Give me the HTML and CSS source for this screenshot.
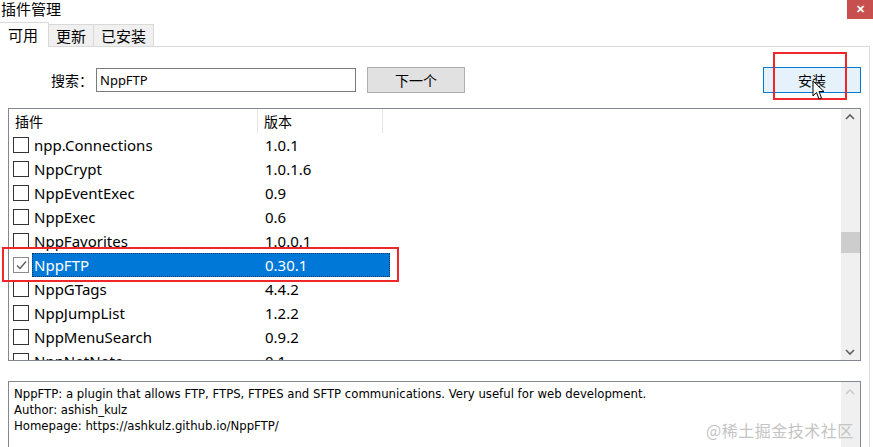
FILE: index.html
```html
<!DOCTYPE html>
<html>
  <head>
    <title>插件管理</title>
    <link rel="stylesheet" href="styles.css">
  </head>
  <body>
    <div class="titlebar">
      <span class="title">插件管理</span>
      <span class="close-btn">✕</span>
    </div>

    <div class="tabs">
      <div class="tab active">可用</div>
      <div class="tab">更新</div>
      <div class="tab">已安装</div>
    </div>

    <div class="panel">
      <div class="search-row">
        <label class="search-label">搜索：</label>
        <input type="text" class="search-input" value="NppFTP" />
        <button class="btn next-btn">下一个</button>
        <button class="btn install-btn">安装</button>
      </div>

      <div class="list-box">
        <div class="list-body">
          <div class="list-header">
            <div class="col-name">插件</div>
            <div class="col-version">版本</div>
          </div>
          <div class="row"><span class="check"></span><span class="cells"><span class="name">npp.Connections</span><span class="version">1.0.1</span></span></div>
          <div class="row"><span class="check"></span><span class="cells"><span class="name">NppCrypt</span><span class="version">1.0.1.6</span></span></div>
          <div class="row"><span class="check"></span><span class="cells"><span class="name">NppEventExec</span><span class="version">0.9</span></span></div>
          <div class="row"><span class="check"></span><span class="cells"><span class="name">NppExec</span><span class="version">0.6</span></span></div>
          <div class="row"><span class="check"></span><span class="cells"><span class="name">NppFavorites</span><span class="version">1.0.0.1</span></span></div>
          <div class="row selected">
            <span class="check checked">
              <svg width="13" height="13" viewBox="0 0 13 13"><path d="M2 6.5 L5 9.5 L11 2.5" fill="none" stroke="#5a5a5a" stroke-width="1.3"/></svg>
            </span>
            <span class="cells"><span class="name">NppFTP</span><span class="version">0.30.1</span></span>
          </div>
          <div class="row"><span class="check"></span><span class="cells"><span class="name">NppGTags</span><span class="version">4.4.2</span></span></div>
          <div class="row"><span class="check"></span><span class="cells"><span class="name">NppJumpList</span><span class="version">1.2.2</span></span></div>
          <div class="row"><span class="check"></span><span class="cells"><span class="name">NppMenuSearch</span><span class="version">0.9.2</span></span></div>
          <div class="row"><span class="check"></span><span class="cells"><span class="name">NppNetNote</span><span class="version">0.1</span></span></div>
        </div>
        <div class="scrollbar">
          <svg class="arrow" width="20" height="17" viewBox="0 0 20 17"><path d="M6 10 L10 6 L14 10" fill="none" stroke="#606060" stroke-width="1.6"/></svg>
          <div class="track"><div class="thumb"></div></div>
          <svg class="arrow" width="20" height="17" viewBox="0 0 20 17"><path d="M6 7 L10 11 L14 7" fill="none" stroke="#606060" stroke-width="1.6"/></svg>
        </div>
      </div>

      <div class="desc-box">
        <div class="desc-text">
          <div>NppFTP: a plugin that allows FTP, FTPS, FTPES and SFTP communications. Very useful for web development.</div>
          <div>Author: ashish_kulz</div>
          <div>Homepage: https://ashkulz.github.io/NppFTP/</div>
        </div>
        <div class="scrollbar disabled">
          <svg class="arrow" width="20" height="17" viewBox="0 0 20 17"><path d="M6 10 L10 6 L14 10" fill="none" stroke="#c8c8c8" stroke-width="1.4"/></svg>
        </div>
      </div>
    </div>

    <!-- annotations drawn over the screenshot -->
    <div class="mark mark-install"></div>
    <div class="mark mark-row"></div>
    <svg class="cursor" width="14" height="22" viewBox="0 0 14 22">
      <path d="M1 1 L1 16 L4.5 12.5 L7 19 L9.5 18 L7 11.5 L12 11.5 Z" fill="#fff" stroke="#000" stroke-width="1"/>
    </svg>
    <div class="watermark">@稀土掘金技术社区</div>
  </body>
</html>
```

FILE: styles.css
```css
:root {
  --border-color: #d9d9d9;
  --box-border: #828790;
  --tab-bg: #f0f0f0;
  --select-bg: #0078d7;
  --scroll-bg: #f0f0f0;
  --mark-red: #f0262b;
}

body {
  margin: 0;
  width: 873px;
  height: 447px;
  overflow: hidden;
  position: relative;
  background-color: #fff;
  color: #000;
  font-family: "Noto Sans", "Noto Sans CJK SC", sans-serif;
}

.titlebar {
  height: 21px;
  display: flex;
  justify-content: space-between;
  align-items: flex-start;
}

.title {
  font-family: "Noto Sans CJK SC", sans-serif;
  font-size: 15px;
  line-height: 18px;
  padding-left: 1px;
}

.close-btn {
  width: 26px;
  height: 19px;
  background-color: #c7504f;
  color: #fff;
  font-size: 11px;
  font-weight: bold;
  line-height: 18px;
  text-align: center;
}

.tabs {
  display: flex;
  align-items: flex-end;
  height: 25px;
}

.tab {
  font-family: "Noto Sans CJK SC", sans-serif;
  font-size: 15px;
  height: 21px;
  line-height: 21px;
  padding: 0 7px;
  background-color: var(--tab-bg);
  border: 1px solid var(--border-color);
  border-bottom: none;
  border-left: none;
}

.tab.active {
  background-color: #fff;
  height: 24px;
  line-height: 23px;
  padding: 0 10px 0 8px;
  margin-bottom: -1px;
  position: relative;
  z-index: 1;
}

.panel {
  width: 870px;
  height: 420px;
  border-top: 1px solid var(--border-color);
  border-right: 1px solid var(--border-color);
  box-sizing: border-box;
  padding-top: 19px;
}

.search-row {
  display: flex;
  align-items: center;
  height: 27px;
  padding-left: 51px;
  padding-right: 8px;
}

.search-label {
  font-family: "Noto Sans CJK SC", sans-serif;
  font-size: 14px;
  width: 45px;
}

.search-input {
  width: 260px;
  height: 24px;
  box-sizing: border-box;
  border: 1px solid #7a7a7a;
  padding: 0 3px;
  font-family: "Noto Sans", sans-serif;
  font-size: 13px;
  color: #000;
  outline: none;
}

.btn {
  font-family: "Noto Sans CJK SC", sans-serif;
  font-size: 14px;
  height: 26px;
  width: 98px;
  padding: 0;
  box-sizing: border-box;
  color: #000;
}

.next-btn {
  margin-left: 11px;
  background-color: #e1e1e1;
  border: 1px solid #adadad;
}

.install-btn {
  margin-left: auto;
  background-color: #e5f1fb;
  border: 1px solid #0078d7;
}

.list-box {
  margin: 15px 8px 0;
  height: 253px;
  border: 1px solid var(--box-border);
  box-sizing: border-box;
  display: flex;
  overflow: hidden;
}

.list-body {
  flex: 1;
  overflow: hidden;
}

.list-header {
  display: flex;
  height: 24px;
  font-family: "Noto Sans CJK SC", sans-serif;
  font-size: 14px;
  line-height: 24px;
}

.col-name {
  width: 249px;
  padding-left: 6px;
  box-sizing: border-box;
  border-right: 1px solid #e5e5e5;
}

.col-version {
  width: 125px;
  padding-left: 6px;
  box-sizing: border-box;
  border-right: 1px solid #e5e5e5;
}

.row {
  display: flex;
  align-items: center;
  height: 24px;
  font-size: 15px;
}

.check {
  width: 16px;
  height: 16px;
  box-sizing: border-box;
  border: 1px solid #333;
  margin-left: 4px;
  margin-right: 3px;
  display: flex;
  align-items: center;
  justify-content: center;
  background-color: #fff;
}

.check.checked {
  border-color: #8a8a8a;
}

.cells {
  display: flex;
  height: 24px;
  line-height: 23px;
  box-sizing: border-box;
  border: 1px solid transparent;
}

.name {
  width: 225px;
  padding-left: 1px;
}

.version {
  width: 124px;
  padding-left: 6px;
}

.row.selected .cells {
  background-color: var(--select-bg);
  color: #fff;
  border: 1px dotted #0a3a66;
}

.scrollbar {
  width: 19px;
  background-color: var(--scroll-bg);
  display: flex;
  flex-direction: column;
  justify-content: space-between;
}

.scrollbar .arrow {
  display: block;
  margin-left: -1px;
}

.track {
  flex: 1;
  position: relative;
}

.thumb {
  margin-top: 106px;
  height: 21px;
  background-color: #cdcdcd;
}

.scrollbar.disabled {
  justify-content: flex-start;
  padding-top: 2px;
}

.desc-box {
  margin: 20px 8px 0;
  height: 80px;
  border: 1px solid var(--box-border);
  box-sizing: border-box;
  display: flex;
}

.desc-text {
  flex: 1;
  padding: 4px 0 0 5px;
  font-family: "DejaVu Sans Condensed", "DejaVu Sans", sans-serif;
  font-stretch: condensed;
  font-size: 13px;
  line-height: 16px;
}

.mark {
  position: absolute;
  border: 2px solid var(--mark-red);
  box-sizing: border-box;
}

.mark-install {
  left: 773px;
  top: 52px;
  width: 74px;
  height: 48px;
}

.mark-row {
  left: 2px;
  top: 247px;
  width: 397px;
  height: 35px;
}

.cursor {
  position: absolute;
  left: 812px;
  top: 80px;
}

.watermark {
  position: absolute;
  left: 706px;
  top: 418px;
  font-family: "Noto Sans CJK SC", sans-serif;
  font-size: 16px;
  color: #c4c4c4;
  letter-spacing: 0.5px;
}
```
